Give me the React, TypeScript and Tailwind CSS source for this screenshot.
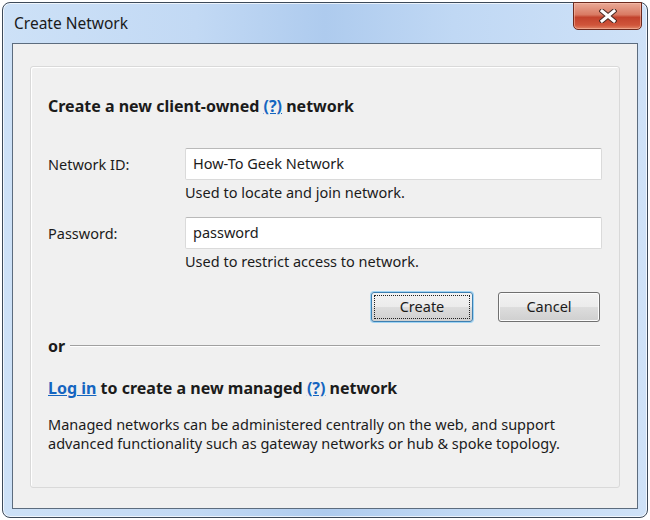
export default function App() {
  return (
    <div className="w-[650px] h-[520px] bg-white p-[2px] font-['Noto_Sans',sans-serif] text-[#1b1b1b]">
      <div className="h-full flex flex-col rounded-[8px] border border-[#3d4a59] bg-[linear-gradient(90deg,#cde1f7_0%,#c2d9f4_30%,#aecbee_50%,#c0d8f4_70%,#cfe2f8_100%)] shadow-[inset_0_0_0_1px_rgba(255,255,255,0.7)]">
        {/* title bar */}
        <div className="h-[40px] flex items-start justify-between pl-[11px] pr-[5px]">
          <span className="mt-[9px] text-[15.5px] leading-[22px] text-[#1a1a1a]">Create Network</span>
          <button className="w-[69px] h-[28px] -mt-px rounded-b-[5px] border border-[#6d2a1e] bg-[linear-gradient(180deg,#e9a996_0%,#d97a63_45%,#c2422c_55%,#d0553b_85%,#e08466_100%)] shadow-[inset_0_0_0_1px_rgba(255,200,180,0.5)] flex items-center justify-center">
            <svg width="18" height="14" viewBox="0 0 18 14">
              <path d="M3 2 L15 12 M15 2 L3 12" stroke="#4a2a24" strokeWidth="5" strokeLinecap="square" />
              <path d="M3 2 L15 12 M15 2 L3 12" stroke="#ffffff" strokeWidth="3" strokeLinecap="square" />
            </svg>
          </button>
        </div>

        {/* client area */}
        <div className="flex-1 mx-[9px] mb-[8px] border border-[#5c6c7e] bg-[#f0f0f0] flex flex-col pt-[22px] pb-[20px] px-[17px]">
          <div className="flex-1 rounded-[3px] border border-[#d9d9d9] shadow-[inset_1px_1px_0_#ffffff] pl-[17px] pr-[17px] pt-[29px]">
            <div className="text-[16px] leading-[20px] font-bold">
              Create a new client-owned <a className="text-[#1565c0] underline">(?)</a> network
            </div>

            <div className="mt-[32px] flex items-center">
              <label className="w-[137px] text-[14.5px] leading-[20px]">Network ID:</label>
              <div className="flex-1 h-[32px] bg-white border border-[#dadada] border-t-[#b9b9b9] rounded-[2px] px-[7px] flex items-center text-[14.5px]">
                How-To Geek Network
              </div>
            </div>
            <div className="mt-[3px] ml-[137px] text-[14.5px] leading-[18px]">Used to locate and join network.</div>

            <div className="mt-[16px] flex items-center">
              <label className="w-[137px] text-[14.5px] leading-[20px]">Password:</label>
              <div className="flex-1 h-[32px] bg-white border border-[#dadada] border-t-[#b9b9b9] rounded-[2px] px-[7px] flex items-center text-[14.5px]">
                password
              </div>
            </div>
            <div className="mt-[3px] ml-[137px] text-[14.5px] leading-[18px]">Used to restrict access to network.</div>

            <div className="mt-[22px] mr-[2px] flex justify-end gap-[25px]">
              <button className="w-[102px] h-[30px] rounded-[3px] border border-[#3c7fb1] bg-[linear-gradient(180deg,#f2f2f2_0%,#ebebeb_50%,#dddddd_51%,#cfcfcf_100%)] shadow-[0_0_0_1px_#9fd3f3] p-[2px]">
                <span className="h-full w-full flex items-center justify-center border border-dotted border-[#222] text-[14.5px]">Create</span>
              </button>
              <button className="w-[102px] h-[30px] rounded-[3px] border border-[#707070] bg-[linear-gradient(180deg,#f2f2f2_0%,#ebebeb_50%,#dddddd_51%,#cfcfcf_100%)] shadow-[inset_0_0_0_1px_#fcfcfc] flex items-center justify-center text-[14.5px]">
                Cancel
              </button>
            </div>

            <div className="mt-[15px] mr-[2px] flex items-center gap-[5px]">
              <span className="text-[16px] leading-[18px] font-bold">or</span>
              <div className="flex-1 h-[2px] border-t border-[#a0a0a0] bg-white"></div>
            </div>

            <div className="mt-[23px] text-[16px] leading-[20px] font-bold">
              <a className="text-[#1565c0] underline">Log in</a> to create a new managed <a className="text-[#1565c0] underline">(?)</a> network
            </div>

            <p className="mt-[17px] text-[14.5px] leading-[19px]">
              Managed networks can be administered centrally on the web, and support
              <br />
              advanced functionality such as gateway networks or hub &amp; spoke topology.
            </p>
          </div>
        </div>
      </div>
    </div>
  );
}
